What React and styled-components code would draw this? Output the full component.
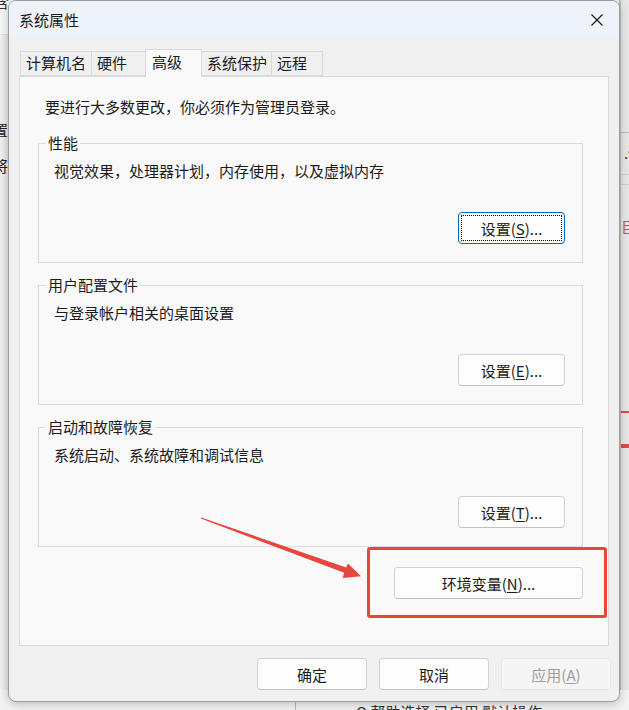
import React from "react";
import styled, { createGlobalStyle } from "styled-components";

const Global = createGlobalStyle`
  html, body { margin: 0; padding: 0; }
  body {
    width: 629px; height: 710px; overflow: hidden;
    background: #ededed;
    font-family: "Noto Sans CJK SC", "Microsoft YaHei UI", sans-serif;
    color: #1b1b1b;
  }
`;

const Desktop = styled.div`
  position: relative;
  width: 629px;
  height: 710px;
  overflow: hidden;
  background: #eeeeee;
`;

/* ---------- windows behind the dialog ---------- */
const BackLeft = styled.div`
  position: absolute;
  left: 0; top: 0;
  width: 40px; height: 710px;
  background: linear-gradient(90deg, #f2f2f2 0, #e4e4e4 8px);
`;
const BackLeftBand = styled.div`
  height: 34px;
  background: #f7f7f7;
  border-bottom: 1px solid #dcdcdc;
`;
const BackFrag = styled.span`
  position: absolute;
  font-size: 15px;
  line-height: 18px;
  color: ${(p) => p.$color || "#222"};
  white-space: nowrap;
`;
const BackRight = styled.div`
  position: absolute;
  left: 619px; top: 0;
  width: 10px; height: 710px;
  background: #e6e6e6;
  border-left: 2px solid #bdbdbd;
`;
const HLine = styled.div`
  position: absolute;
  left: 0; right: 0;
  top: ${(p) => p.$y}px;
  height: ${(p) => p.$h || 1}px;
  background: ${(p) => p.$c || "#cfcfcf"};
`;
const BackBottom = styled.div`
  position: absolute;
  left: 0; top: 690px;
  width: 629px; height: 20px;
  background: #f2f2f2;
`;
const BackDivider = styled.div`
  position: absolute;
  left: 295px; top: 0;
  width: 1px; height: 20px;
  background: #b8b8b8;
`;

/* ---------- dialog ---------- */
const Dialog = styled.div`
  position: absolute;
  left: 8px; top: 0;
  width: 612px;
  box-sizing: border-box;
  border: 1px solid #9c9c9c;
  border-radius: 8px;
  background: #f0f0f0;
  box-shadow: 0 2px 10px rgba(0, 0, 0, 0.22);
  overflow: hidden;
  display: flex;
  flex-direction: column;
`;
const TitleBar = styled.div`
  height: 36px;
  background: #eef3f9;
  display: flex;
  align-items: center;
  justify-content: space-between;
  padding: 0 12px 0 10px;
  font-size: 15px;
  color: #1a1a1a;
`;
const CloseBtn = styled.div`
  width: 20px; height: 20px;
  display: flex; align-items: center; justify-content: center;
  margin-top: 1px;
`;
const Body = styled.div`
  padding: 11px 10px 11px 10px;
  display: flex;
  flex-direction: column;
`;
const TabRow = styled.div`
  display: flex;
  align-items: flex-end;
  height: 28px;
  padding-left: 1px;
  position: relative;
  z-index: 1;
`;
const Tab = styled.div`
  box-sizing: border-box;
  width: ${(p) => p.$w}px;
  height: ${(p) => (p.$active ? 28 : 25)}px;
  margin-right: -1px;
  margin-bottom: ${(p) => (p.$active ? -1 : 0)}px;
  border: 1px solid #d9d9d9;
  border-bottom: ${(p) => (p.$active ? "none" : "1px solid #d9d9d9")};
  background: ${(p) => (p.$active ? "#f9f9f9" : "#f0f0f0")};
  font-size: 15px;
  line-height: 20px;
  padding: ${(p) => (p.$active ? "2px 0 0 6px" : "1px 0 0 5px")};
  color: #1b1b1b;
  position: relative;
  z-index: ${(p) => (p.$active ? 2 : 1)};
`;
const Panel = styled.div`
  box-sizing: border-box;
  height: 570px;
  border: 1px solid #d9d9d9;
  background: #f9f9f9;
  padding: 20px 0 0 18px;
  display: flex;
  flex-direction: column;
`;
const Intro = styled.div`
  font-size: 15px;
  line-height: 20px;
  margin-left: 7px;
`;
const Groups = styled.div`
  display: flex;
  flex-direction: column;
  gap: 22px;
  margin-top: 26px;
`;
const Group = styled.div`
  box-sizing: border-box;
  width: 545px;
  height: 120px;
  border: 1px solid #dcdcdc;
  padding: 0 17px 0 15px;
  display: flex;
  flex-direction: column;
`;
const Legend = styled.div`
  align-self: flex-start;
  margin: -11px 0 0 -8px;
  padding: 0 2px;
  background: #f9f9f9;
  font-size: 15px;
  line-height: 20px;
`;
const Desc = styled.div`
  margin-top: 8px;
  font-size: 15px;
  line-height: 20px;
`;
const BtnRow = styled.div`
  display: flex;
  justify-content: flex-end;
  margin-top: ${(p) => p.$mt || 0}px;
  padding-right: ${(p) => p.$pr || 0}px;
  width: ${(p) => (p.$w ? `${p.$w}px` : "auto")};
`;
const Button = styled.div`
  box-sizing: border-box;
  width: ${(p) => p.$w}px;
  height: 32px;
  border-radius: 4px;
  border: 1px solid ${(p) => (p.$disabled ? "#e6e6e6" : "#d2d2d2")};
  border-bottom-color: ${(p) => (p.$disabled ? "#e6e6e6" : "#c2c2c2")};
  background: ${(p) => (p.$disabled ? "#f5f5f5" : "#fdfdfd")};
  color: ${(p) => (p.$disabled ? "#9d9d9d" : "#1b1b1b")};
  font-size: 15px;
  display: flex;
  align-items: center;
  justify-content: center;
  position: relative;
  ${(p) =>
    p.$focused &&
    `
    border: 1px solid #0067c0;
    box-shadow: inset 0 0 0 1px #ffffff;
  `}
  u { text-underline-offset: 2px; text-decoration-thickness: 1px; }
`;
const FocusRing = styled.span`
  position: absolute;
  inset: 2px;
  border: 1px dotted #000;
  border-radius: 1px;
  pointer-events: none;
`;
const Footer = styled.div`
  display: flex;
  justify-content: flex-end;
  gap: 12px;
  margin-top: 12px;
  margin-right: -2px;
`;

/* ---------- annotations ---------- */
const RedBox = styled.div`
  position: absolute;
  left: 367px; top: 547px;
  width: 240px; height: 71px;
  box-sizing: border-box;
  border: 3px solid #e8463c;
  border-radius: 3px;
  pointer-events: none;
`;
const Overlay = styled.svg`
  position: absolute;
  left: 0; top: 0;
  pointer-events: none;
`;

const Close = () => (
  <svg width="14" height="14" viewBox="0 0 14 14">
    <path d="M1.5 1.5 L12.5 12.5 M12.5 1.5 L1.5 12.5" stroke="#1a1a1a" strokeWidth="1.2" />
  </svg>
);

const tabs = [
  { label: "计算机名", w: 72 },
  { label: "硬件", w: 55 },
  { label: "高级", w: 57, active: true },
  { label: "系统保护", w: 71 },
  { label: "远程", w: 52 },
];

const groups = [
  { title: "性能", desc: "视觉效果，处理器计划，内存使用，以及虚拟内存", key: "S", focused: true },
  { title: "用户配置文件", desc: "与登录帐户相关的桌面设置", key: "E" },
  { title: "启动和故障恢复", desc: "系统启动、系统故障和调试信息", key: "T" },
];

export default function App() {
  return (
    <Desktop>
      <Global />
      <BackLeft>
        <BackLeftBand />
      </BackLeft>
      <BackFrag style={{ left: -6, top: -7 }} $color="#333">含</BackFrag>
      <BackFrag style={{ left: -7, top: 121 }}>置</BackFrag>
      <BackFrag style={{ left: -7, top: 157 }}>将</BackFrag>
      <BackRight>
        <HLine $y={132} $c="#bcbcbc" />
        <BackFrag style={{ left: 3, top: 144 }} $color="#333">.▾</BackFrag>
        <HLine $y={174} $c="#cfcfcf" />
        <HLine $y={184} $c="#cfcfcf" />
        <BackFrag style={{ left: 0, top: 218 }} $color="#e0483c">巨</BackFrag>
        <HLine $y={411} $h={2} $c="#e04a3e" />
        <HLine $y={444} $h={4} $c="#e04a3e" />
      </BackRight>
      <BackBottom>
        <BackDivider />
        <BackFrag style={{ left: 356, top: 13 }} $color="#333">Q 帮助选择 已启用 默认操作</BackFrag>
      </BackBottom>

      <Dialog>
        <TitleBar>
          <span>系统属性</span>
          <CloseBtn>
            <Close />
          </CloseBtn>
        </TitleBar>
        <Body>
          <TabRow>
            {tabs.map((t) => (
              <Tab key={t.label} $w={t.w} $active={t.active}>
                {t.label}
              </Tab>
            ))}
          </TabRow>
          <Panel>
            <Intro>要进行大多数更改，你必须作为管理员登录。</Intro>
            <Groups>
              {groups.map((g) => (
                <Group key={g.title}>
                  <Legend>{g.title}</Legend>
                  <Desc>{g.desc}</Desc>
                  <BtnRow $mt={31}>
                    <Button $w={107} $focused={g.focused}>
                      设置(<u>{g.key}</u>)...
                      {g.focused && <FocusRing />}
                    </Button>
                  </BtnRow>
                </Group>
              ))}
            </Groups>
            <BtnRow $mt={20} $w={545} $pr={2}>
              <Button $w={189}>
                环境变量(<u>N</u>)...
              </Button>
            </BtnRow>
          </Panel>
          <Footer>
            <Button $w={110}>确定</Button>
            <Button $w={110}>取消</Button>
            <Button $w={110} $disabled>
              应用(<u>A</u>)
            </Button>
          </Footer>
        </Body>
      </Dialog>

      <RedBox />
      <Overlay width="629" height="710" viewBox="0 0 629 710">
        <polygon
          points="200.8,518.6 201.2,517.4 346.2,567.6 348,563.5 361,576.3 342.6,578 344.2,572.8"
          fill="#e8463c"
        />
      </Overlay>
    </Desktop>
  );
}
